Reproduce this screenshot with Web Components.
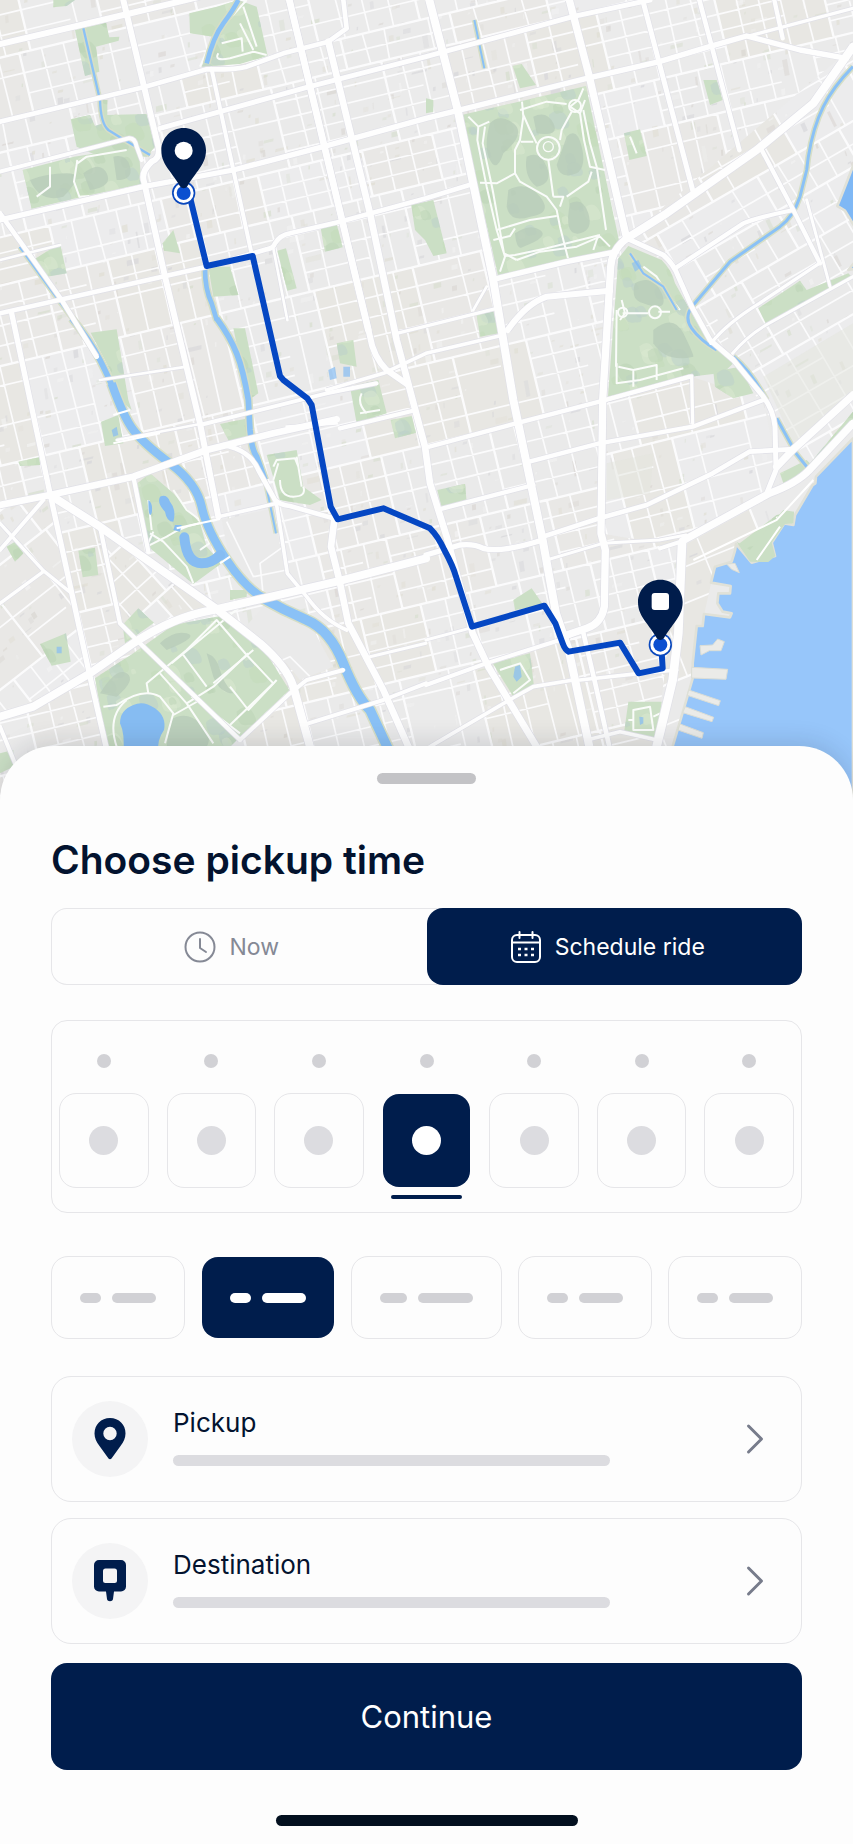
<!DOCTYPE html>
<html lang="en">
<head>
<meta charset="utf-8">
<meta name="viewport" content="width=device-width, initial-scale=1">
<title>Choose pickup time</title>
<style>
    :root {
        --navy: #001d4c;
        --ink: #03132f;
        --line: #e6e6e9;
        --bone: #d1d1d5;
        --bone-soft: #dcdce0;
        --muted: #858995;
    }
    body {
        margin: 0;
        background: #fdfdfd;
        color: var(--ink);
        font-family: Inter, "Liberation Sans", sans-serif;
    }
</style>
</head>
<body>
<city-map></city-map>
<ride-sheet heading="Choose pickup time">
    <ride-mode></ride-mode>
    <day-strip days="7" selected="3"></day-strip>
    <time-slots></time-slots>
    <place-list>
        <place-row label="Pickup">
            <svg slot="icon" width="32" height="42" viewBox="0 0 32 42"><path fill="#001d4c" fill-rule="evenodd" d="M16 0C7 0 .5 6.600 .5 15.400c0 4.600 1.900 8.300 5 12.700l9 12.400c.8 1 2.200 1 3 0l9-12.400c3.100-4.400 5-8.100 5-12.700C31.500 6.600 25 0 16 0zm0 8.800a6.700 6.700 0 1 1 0 13.400 6.700 6.700 0 0 1 0-13.400z"/></svg>
        </place-row>
        <place-row label="Destination">
            <svg slot="icon" width="32" height="42" viewBox="0 0 32 42"><path fill="#001d4c" fill-rule="evenodd" d="M5 0h22a5 5 0 0 1 5 5v21.500a5 5 0 0 1-5 5h-7l-1 7.500c-.3 3-5.700 3-6 0l-1-7.500H5a5 5 0 0 1-5-5V5a5 5 0 0 1 5-5zm6.500 8.500A2.500 2.500 0 0 0 9 11v9.500a2.500 2.500 0 0 0 2.500 2.500h9a2.500 2.500 0 0 0 2.500-2.500V11a2.500 2.500 0 0 0-2.500-2.500z"/></svg>
        </place-row>
    </place-list>
    <main-action>Continue</main-action>
</ride-sheet>

<script>
(function() {
    function attach(el, html) {
        const template = document.createElement('template');
        template.innerHTML = html;
        el.attachShadow({mode: 'open'});
        el.shadowRoot.appendChild(template.content.cloneNode(true));
    }

    /* ---- map ---- */

    // Small repeatable generator, so the side streets are the same on each load
    function makeRandom(seed) {
        return function() {
            seed = (seed * 16807) % 2147483647;
            return seed / 2147483647;
        };
    }

    // Areas that share one street direction: outline, angle, block width and height
    const districts = [
        {points: '0,0 2559,0 2559,140 1880,715 1820,1200 1800,1600 2040,1640 1965,2400 0,2400', angle: -13.5, w: 72, h: 58},
        {points: '1880,715 2559,140 2559,1270 2428,1410 2300,1240 2200,1080 2075,920 2025,805', angle: -30, w: 84, h: 66},
        {points: '1810,1200 2075,1130 2290,1200 2340,1450 2045,1640 1803,1600', angle: -14, w: 76, h: 74},
        {points: '2045,1640 2300,1500 2340,1600 2140,1720 2080,1990 2035,2240 1965,2240', angle: -22, w: 200, h: 110},
        {points: '0,1520 150,1485 270,2020 0,2150', angle: -38, w: 78, h: 72},
        {points: '310,1590 640,1820 400,1925 360,1870', angle: -42, w: 66, h: 76}
    ];

    const parks = [
        'M225 90L318 68L328 112L358 110L356 122L288 140L298 215L255 228Z',
        'M298 300L322 300L322 345L440 342L465 440L440 470L300 470L230 440L212 358L270 345L285 378L310 370Z',
        'M68 510L222 470L415 440L425 552L240 592L95 626Z',
        'M568 40L650 20L715 0L770 20L803 168L720 192L605 200L640 110L570 100Z',
        'M160 0L225 0L200 18L160 22Z',
        'M100 780L180 730L200 820L140 830Z',
        'M488 730L520 690L540 760L492 752Z',
        'M962 685L1010 672L1028 742L975 755Z',
        'M832 752L858 745L890 865L862 872Z',
        'M625 800L690 800L715 885L640 890Z',
        'M1234 615L1300 600L1340 760L1300 768L1275 720L1245 690Z',
        'M272 998L350 988L385 1200L395 1230L360 1200L330 1110Z',
        'M700 985L735 985L775 1180L745 1200Z',
        'M1010 1030L1060 1020L1070 1100L1020 1090Z',
        'M1050 1160L1135 1140L1160 1240L1070 1270Z',
        'M1172 1260L1235 1248L1248 1298L1185 1315Z',
        'M303 1265L355 1245L370 1330L315 1338Z',
        'M660 1272L745 1255L755 1330L690 1330Z',
        'M800 1365L890 1350L910 1460L965 1500L930 1515L840 1500Z',
        'M412 1450L450 1420L520 1480L600 1570L620 1640L665 1690L580 1752L445 1640Z',
        'M235 1652L285 1643L295 1725L248 1732Z',
        'M20 1640L45 1625L70 1660L45 1685Z',
        'M415 1825L462 1868L375 1930L368 1875Z',
        'M120 1932L198 1900L212 1985L155 1997Z',
        'M285 2035L400 1960L520 1875L660 1848L780 1930L868 2070L720 2210L690 2240L322 2240Z',
        'M690 1770L740 1770L740 1790L690 1800Z',
        'M55 1385L118 1372L120 1395L60 1398Z',
        'M0 2260L40 2250L40 2300L0 2320Z',
        'M1385 345L1758 258L1862 745L1495 830Z',
        'M1855 775L1885 738L1985 780Q2015 810 2025 850L2070 930L2115 1010L2200 1090L2170 1118L2070 1130L1824 1190Z',
        'M2140 1115L2220 1100L2260 1180L2200 1195L2145 1160Z',
        'M1538 198L1565 192L1608 255L1560 265Z',
        'M1872 400L1920 388L1940 468L1888 480Z',
        'M2110 240L2150 240L2168 300L2130 315Z',
        'M2275 925L2400 842L2420 870L2545 820L2559 835L2298 972Z',
        'M1430 945L1480 935L1495 1000L1440 1010Z',
        'M1278 295L1300 300L1300 335L1278 340Z',
        'M1312 1470L1395 1452L1400 1505L1325 1522Z',
        'M1540 1800L1595 1765L1630 1815L1545 1830Z',
        'M1478 1990L1590 1960L1602 2060L1540 2090Z',
        'M1885 2105L1985 2105L1970 2215L1872 2200Z',
        'M2340 1420L2420 1380L2440 1400L2350 1450Z',
        'M2430 1390L2559 1235L2559 1262L2440 1405Z',
        'M2212 1635L2330 1545L2382 1535L2376 1572L2350 1570L2315 1628L2310 1672L2250 1688Z'
    ];

    const groves = [
        'M1470 370Q1500 340 1540 370T1510 460Q1490 520 1470 480T1470 370Z',
        'M1700 410Q1730 380 1745 440T1730 520Q1680 540 1670 495Z',
        'M1525 570Q1580 540 1620 590T1590 650Q1530 670 1520 620Z',
        'M1580 470Q1620 450 1640 500T1610 560Q1570 530 1580 470Z',
        'M1600 350Q1640 330 1660 370T1610 400Z',
        'M1545 700Q1590 670 1620 690T1570 740Q1550 755 1545 700Z',
        'M1710 610Q1750 590 1765 640T1740 700Q1690 710 1710 610Z',
        'M1905 850Q1960 820 1985 880T1930 910Q1890 900 1905 850Z',
        'M1960 990Q2020 940 2050 1000T2080 1070Q2000 1090 1960 1030Z',
        'M510 2160Q560 2130 600 2170T620 2240H500Z',
        'M300 2080Q350 2000 380 2020T350 2090Z',
        'M480 1930Q520 1890 560 1900T500 1950Z',
        'M620 1960Q650 1970 660 2010T700 2080Q660 2080 640 2030Z',
        'M250 520Q300 480 320 520T270 570Z',
        'M90 540Q140 520 200 520T190 590Q120 610 90 540Z',
        'M340 470Q380 460 390 500T350 540Z'
    ];

    const parkPaths = [
        'M1405 350L1435 380L1468 365M1435 380L1432 420L1460 560L1490 690L1515 770L1500 815M1455 380L1448 430L1478 570L1512 760L1550 780',
        'M1550 780L1620 755L1730 740L1800 710L1830 740M1515 768L1545 765L1640 745L1800 705M1750 265L1735 300L1710 320L1740 340L1755 300',
        'M1560 330L1640 305L1700 312M1566 305L1570 350L1560 420L1545 450L1545 520L1490 550L1440 548M1568 340L1590 390L1610 430',
        'M1715 335L1685 390L1680 420M1740 340L1752 420L1770 500L1815 510M1775 515L1765 545L1700 590M1750 330L1770 430L1790 500L1805 600L1818 690',
        'M1545 520L1560 545L1640 590L1670 630L1680 680L1704 775M1645 480L1660 590M1562 425H1600M1490 690L1590 660L1670 648M1660 590H1690L1680 620',
        'M1480 720L1530 708L1545 685M1795 705L1780 750',
        'M1868 940H1945M1865 900L1875 940L1860 960M1975 935H2010M1855 1100L1900 1110L1970 1095V1140M1900 1110V1160M1850 1090V1150L1920 1140L2050 1105',
        'M1850 930L1848 1100M1930 800L1970 830L2000 880L2040 930',
        'M600 200L640 110L740 0M640 110L650 125M655 160Q640 185 690 175L760 155L800 165M730 20L770 140M665 130L725 115L728 155M760 150L720 70',
        'M232 480L222 545L238 590L268 588M232 490L260 470L380 450M150 500V560L110 590',
        'M820 1400L830 1380L885 1375L895 1400M820 1440L835 1390M840 1440Q840 1490 880 1490T910 1460M890 1370L905 1460',
        'M450 1600L490 1625L560 1700L580 1750M460 1595L440 1640L500 1610Q560 1570 650 1560M445 1500L455 1590M520 1470L560 1530L600 1560L628 1630L600 1650',
        'M445 2080L440 2050L560 1950L650 1860L740 1965L820 2050L690 2175M515 1990L720 1820M550 1965L620 2060M745 1960L640 2060L560 2110',
        'M310 2120L350 2115Q430 2060 480 2090L520 2140L495 2230M520 2145L600 2100M480 2020L560 2110L640 2230M575 2090L720 2200M640 2050L760 1950',
        'M350 2240Q320 2150 380 2100M690 2060L745 2130L830 2040',
        'M1900 2130L1950 2120L1960 2190L1900 2190ZM1885 2160H1900M1960 2150L1980 2140',
        'M1500 2010L1560 1990L1590 2040L1540 2080M1890 410L1910 460',
        'M2295 1650L2340 1580L2330 1550M2250 1660L2290 1640M1080 1240L1140 1230M1085 1180Q1070 1210 1100 1240'
    ];

    // [width, path]
    const roads = [
        [8, 'M350 1320L600 1272M820 745L862 960M0 780L180 735M300 1140L560 1100M1420 930L1460 860M860 1280L1010 1270'],
        [9, 'M2198 1060Q2240 1010 2298 975L2559 830M1110 1970L1278 1930M2420 600L2490 860M1640 1680L1808 1630L1978 1620L2058 1605M1278 1920L1408 1885'],
        [10, 'M2133 1030Q2180 970 2278 910L2458 790M1820 1200L2075 1128L2078 1270M0 1570L130 1712L215 1780M0 1810L130 1715M1190 1000L1490 925M2240 110L2559 25'],
        [11, 'M980 1170L1150 1120L1278 1060L1510 1005M655 1550L830 1510M830 1515L862 1720L920 1790Q970 1860 1040 1890M1290 2240L1528 2100L1600 2060L1720 2040M1740 2040L1920 2020L2030 2010M1760 2220L1860 2195L1970 2220'],
        [12, 'M0 515L385 415Q405 412 410 440L425 480M635 208L700 510L755 762M600 1275L880 1205L980 1180L1130 1150M130 1500L0 1650M720 2220L870 2080L920 2040L1030 2010M925 2170L1150 2100L1278 2050M1278 2055L1458 1990L1680 1920L1748 1890M0 2180L45 2290M1980 1645L2058 1620'],
        [13, 'M1288 1340L1548 1270L1798 1205L2070 1130M1588 1385L1798 1330L2078 1280L2290 1200M400 1430L445 1655M300 1580L360 1870L420 1930L720 2220M2280 440L2380 630L2460 790M2025 805L2230 670Q2260 655 2380 630M2323 0L2348 115M1318 1528L1600 1455M1020 1285L1248 1230'],
        [14, 'M0 365L430 262L620 208Q700 210 740 200L850 160L985 125L1040 85L1030 0M0 640L100 780L185 900L290 1070M2098 0L2138 150L2218 450M0 940L400 850L620 800L800 748Q820 745 825 730Q840 705 870 700L1020 665L1278 595L1408 555M670 1335Q750 1350 775 1410L825 1500Q840 1515 870 1518L1000 1555M1748 1890L1788 2060L1828 2240M1628 1610L1798 1555L1940 1515L2138 1420L2248 1355L2370 1348'],
        [15, 'M480 385L660 335L920 262L1278 170L1718 50L1950 0M1928 0L1978 190L2078 570M1880 715L1990 765Q2020 790 2035 830L2075 920L2130 1020L2200 1080L2290 1190Q2320 1230 2325 1280L2328 1410L2300 1480'],
        [16, 'M0 660L430 560L700 510L970 440L1278 355L1760 235L1978 185L2128 140L2240 108L2400 150L2540 175M1493 835L1700 785L1850 755M35 940L150 1480L270 2030L318 2240M1278 1665L1380 1635Q1420 1630 1450 1645Q1500 1660 1628 1620'],
        [18, 'M370 0L475 440Q482 475 455 485Q422 515 432 545L495 830L600 1270L655 1550M0 132L370 45L600 -10M1523 990Q1580 910 1640 890L1830 872M868 0L1110 1010Q1120 1070 1160 1110L1225 1155'],
        [20, 'M985 125L1110 640L1190 1020L1275 1340L1290 1450L1340 1610L1418 1900L1465 2000L1610 2240M0 1515L150 1485L400 1430L620 1350L820 1300L1010 1258M1003 1560L993 1640L1018 1740L1045 1870L1150 2070L1225 2240M868 0L1105 990'],
        [22, 'M1708 0L1768 230L1880 715M2559 1270L2428 1410Q2390 1450 2308 1480L2048 1622M2559 1185L2378 1350L2330 1400M1880 715Q1835 750 1832 800L1808 1200L1803 1600L1816 1650L1813 1820Q1805 1870 1760 1885L1700 1905'],
        [24, 'M1288 0L1373 330L1478 830L1540 1200L1628 1620L1668 1840L1706 1950L1768 2240M1880 715L2000 640L2270 450L2440 310L2559 140M150 1485L300 1580L640 1820L780 1930Q860 2000 880 2060L930 2240M0 2150L100 2120L270 2020L400 1930Q520 1850 640 1830L1010 1745L1278 1675'],
        [26, 'M2046 1630L2035 1900L2018 2040L1965 2260']
    ];

    // [width, path]
    const rivers = [
        [6, 'M1423 60L1453 205M795 1440L828 1600M1890 760L1930 820L1990 860L2030 930'],
        [7, 'M250 85L300 300Q302 370 325 390L360 412L450 465'],
        [9, 'M60 740L180 905L225 965M2559 200Q2500 260 2470 320T2425 470L2420 510L2400 590Q2380 650 2340 680L2190 785L2080 915Q2050 950 2075 985Q2100 1020 2150 1050M2200 1070Q2250 1110 2300 1200M2330 1255L2388 1360L2428 1410'],
        [14, 'M715 0Q700 30 670 70T620 190M615 805Q615 870 635 910L650 960'],
        [17, 'M215 955Q270 1020 300 1080T350 1190M650 955Q690 1010 710 1060T745 1200L750 1290Q755 1350 770 1370L795 1440'],
        [25, 'M335 1150Q370 1250 400 1290T510 1390Q590 1450 605 1520T680 1680T800 1800'],
        [29, 'M780 1790Q850 1830 920 1860T1030 1990T1110 2130L1180 2280']
    ];

    const coast = 'M2559 1315L2448 1430L2446 1450L2438 1455L2385 1545L2380 1575L2353 1570L2315 1628L2325 1668L2255 1688L2208 1632L2205 1652L2195 1685L2145 1700L2133 1748L2192 1758L2190 1780L2155 1780L2152 1810L2168 1835L2195 1840L2190 1852L2112 1842L2108 1878L2090 1878L2078 1990L2078 2035L2068 2070L2000 2300L1990 2400L2559 2400Z';

    const piers = [
        'M2075 2002L2183 2008L2178 2038L2075 2034Z',
        'M2066 2070L2161 2102L2156 2117L2062 2086Z',
        'M2056 2120L2141 2152L2136 2165L2048 2138Z',
        'M2040 2172L2110 2198L2106 2215L2034 2190Z',
        'M2100 1937L2138 1935L2153 1917L2173 1925L2163 1952L2128 1952L2103 1965Z',
        'M2180 1692L2205 1690L2218 1718L2195 1708Z'
    ];

    const route = 'M551 590L572 600L620 798L758 768L840 1128L850 1140L922 1195L935 1215L992 1520L1013 1558L1150 1525L1290 1585Q1315 1610 1333 1650Q1360 1700 1368 1730L1416 1880L1633 1817L1666 1870L1688 1930Q1695 1950 1706 1955L1860 1928L1916 2020L1988 2005L1984 1940';

    function pin(x, y, mark) {
        return `<g transform="translate(${x} ${y})">
            <circle r="35" fill="#0a48bd"/><circle r="30" fill="#fff"/><circle r="21" fill="#0b4fd0"/>
            <path d="M0 -195C-38 -195 -67 -165 -67 -128C-67 -103 -57 -86 -44 -68C-28 -46 -19 -34 -11 -20C-6 -12 6 -12 11 -20C19 -34 28 -46 44 -68C57 -86 67 -103 67 -128C67 -165 38 -195 0 -195Z" fill="#001c4b"/>
            ${mark}
        </g>`;
    }

    function streets() {
        const random = makeRandom(4217);
        const pick = list => list[Math.floor(random() * list.length)];
        let html = '';
        districts.forEach((district, i) => {
            const pts = district.points.split(' ').map(p => p.split(',').map(Number));
            const xs = pts.map(p => p[0]);
            const ys = pts.map(p => p[1]);
            const cx = (Math.min(...xs) + Math.max(...xs)) / 2;
            const cy = (Math.min(...ys) + Math.max(...ys)) / 2;
            const reach = Math.hypot(Math.max(...xs) - cx, Math.max(...ys) - cy) + 80;
            let wide = '';
            let thin = '';
            let ground = '';
            let lots = '';
            // rows of blocks, each with its own run of cross streets
            for (let y = -reach; y < reach; ) {
                const rows = 2 + Math.floor(random() * 4);
                const depth = district.h * rows * (0.8 + random() * 0.4);
                for (let x = -reach; x < reach; ) {
                    const cols = 3 + Math.floor(random() * 3);
                    const width = district.w * cols * (0.8 + random() * 0.3);
                    wide += `M${x.toFixed()} ${(y + depth).toFixed()}V${y.toFixed()}H${(x + width).toFixed()}`;
                    ground += `<path d="M${x.toFixed()} ${y.toFixed()}h${width.toFixed()}v${depth.toFixed()}h-${width.toFixed()}z" fill="${pick(['#ececed', '#ebebeb', '#e9e8e6', '#eaeaea', '#e8e7e3'])}"/>`;
                    for (let c = 1; c < cols; c++) {
                        const at = (x + width * c / cols).toFixed();
                        if (random() < 0.88) {
                            thin += `M${at} ${y.toFixed()}L${(+at + random() * 10 - 5).toFixed()} ${(y + depth).toFixed()}`;
                        }
                    }
                    for (let r = 1; r < rows; r++) {
                        const at = (y + depth * r / rows).toFixed();
                        if (random() < 0.82) {
                            thin += `M${x.toFixed()} ${at}H${(x + width * (random() < 0.75 ? 1 : 0.6)).toFixed()}`;
                        }
                    }
                    for (let n = 0; n < cols * rows; n++) {
                        const lx = (x + random() * width).toFixed();
                        const ly = (y + random() * depth).toFixed();
                        const long = (4 + random() * random() * 50).toFixed();
                        const short = (3 + random() * 14).toFixed();
                        const box = random() < 0.5 ? [long, short] : [short, long];
                        lots += `<path d="M${lx} ${ly}h${box[0]}l-3 ${box[1]}h-${box[0]}z" fill="${pick(['#d8d4d0', '#dfddd2', '#d4d4d8', '#d5ddcc', '#f3f3f3'])}" opacity="${(0.25 + random() * 0.4).toFixed(2)}"/>`;
                    }
                    x += width;
                }
                y += depth;
            }
            html += `<clipPath id="d${i}"><polygon points="${district.points}"/></clipPath>
                <g clip-path="url(#d${i})">
                <g transform="translate(${cx} ${cy}) rotate(${district.angle})" fill="none" stroke="#fbfbfc">
                    <g stroke="none">${ground}${lots}</g>
                    <path stroke-width="5" d="${thin}"/><path stroke-width="7" d="${wide}"/>
                </g></g>`;
        });
        return html;
    }

    // soft tree cover, clipped to the parks
    function trees() {
        const random = makeRandom(911);
        let html = '';
        for (let n = 0; n < 1600; n++) {
            const x = (random() * 2559).toFixed();
            const y = (random() * 2300).toFixed();
            const r = 8 + random() * 26;
            const tint = ['#bcd4b5', '#dbe9d2', '#c3dcba', '#bcd0cb'][Math.floor(random() * 4)];
            html += `<path d="M${x} ${y}q${r.toFixed()} -${(r * 0.9).toFixed()} ${(r * 1.6).toFixed()} ${(r * 0.2).toFixed()}t-${(r * 0.5).toFixed()} ${r.toFixed()}q-${r.toFixed()} 9 -${(r * 1.1).toFixed()} -${(r * 1.2).toFixed()}z" fill="${tint}" opacity=".5"/>`;
        }
        return `<clipPath id="parks"><path d="${parks.join('')}"/></clipPath><g clip-path="url(#parks)">${html}</g>`;
    }

    class CityMap extends HTMLElement {
        constructor() {
            super();
            const banks = rivers.map(r => `<path stroke-width="${r[0] + 9}" d="${r[1]}"/>`).join('');
            const water = rivers.map(r => `<path stroke-width="${r[0]}" d="${r[1]}"/>`).join('');
            const edges = roads.map(r => `<path stroke-width="${r[0] + 4}" d="${r[1]}"/>`).join('');
            const fills = roads.map(r => `<path stroke-width="${r[0]}" d="${r[1]}"/>`).join('');
            attach(this, `
                <style>
                    :host {
                        display: block;
                    }
                    svg {
                        display: block;
                        width: 100%;
                        height: auto;
                    }
                </style>
                <svg viewBox="0 0 2559 2400" role="img" aria-label="Route from pickup to destination">
                    <rect width="2559" height="2400" fill="#ebebeb"/>
                    ${streets()}
                    <path fill="#eaeaea" d="M665 1560L820 1525L855 1720L900 1780L790 1790L690 1690ZM720 1900L790 1820L940 1890L1000 2000L900 2040L860 1990Z"/>
                    <path fill="#e4e5de" opacity=".5" d="M1820 1390L1960 1360L1950 1480L1820 1500ZM2290 1130L2559 970V1180L2380 1330Z"/>
                    <path fill="none" stroke="#fbfbfc" stroke-width="5" d="M680 1565L760 1730L860 1710M790 1790L780 1690L850 1640M730 1900L800 2000L870 1970L930 2030"/>
                    <g fill="#cbdfc5">${parks.map(d => `<path d="${d}"/>`).join('')}</g>
                    ${trees()}
                    <g fill="#b7cbb9" opacity=".75">${groves.map(d => `<path d="${d}"/>`).join('')}</g>
                    <g fill="none" stroke="#fafcfa" stroke-width="6" stroke-linejoin="round">
                        ${parkPaths.map(d => `<path d="${d}"/>`).join('')}
                        <circle cx="1645" cy="445" r="34"/><circle cx="1645" cy="440" r="15" stroke-width="4"/>
                        <circle cx="1868" cy="937" r="14"/><circle cx="1965" cy="937" r="18"/><circle cx="1725" cy="318" r="18"/>
                    </g>
                    <g fill="none" stroke-linejoin="round">
                        <g stroke="#d6dec6">${banks}</g>
                        <g stroke="#8ac1f6">${water}</g>
                        <path stroke="#86bcf2" stroke-width="30" stroke-linecap="round" d="M553 1612Q560 1690 605 1690Q635 1690 660 1665"/>
                    </g>
                    <g fill="#86bcf2">
                        <path d="M370 2260Q375 2200 360 2170Q360 2130 400 2115Q430 2100 465 2125Q500 2150 492 2190Q470 2220 475 2260Z"/>
                        <path d="M480 1490Q500 1480 510 1505Q530 1530 520 1565Q500 1565 495 1535Q470 1510 480 1490ZM445 1500Q460 1510 455 1540Q445 1560 445 1500ZM525 1575L545 1575L540 1595L520 1590Z"/>
                        <path opacity=".7" d="M1545 2000L1560 1995L1565 2030L1550 2045L1540 2030ZM1918 2150L1930 2152V2170L1920 2175ZM335 1290L350 1280L355 1305L340 1310ZM985 1110L1005 1100L1010 1135L990 1140ZM1030 1100H1050V1130H1030ZM170 1940H185V1960H170Z"/>
                        <path d="M1895 790L1915 780L1925 800L1905 815Z" opacity=".6"/>
                    </g>
                    <g stroke="#e0e1d8" stroke-width="8" stroke-linejoin="round">
                        <path fill="#97c6fa" d="${coast}"/>
                        <path fill="#7fb8f5" d="M2570 470L2535 560L2512 618L2535 632L2570 690ZM2570 780L2545 810L2570 805Z"/>
                    </g>
                    <path fill="#cbdfc5" d="M2210 1625L2250 1685L2305 1686L2326 1668L2315 1628L2355 1572L2380 1570L2382 1535L2350 1530L2250 1650Z"/>
                    <g fill="#ebebe8" stroke="#dcded6" stroke-width="3">${piers.map(d => `<path d="${d}"/>`).join('')}</g>
                    <g fill="none" stroke-linejoin="round">
                        <g stroke="#e0e0e7">${edges}</g>
                        <g stroke="#fefefe" stroke-linecap="round">${fills}</g>
                    </g>
                    <path fill="none" stroke="#fff" stroke-width="6" d="M340 1330L480 1300M530 1585L660 1557M660 1690L690 1670M390 1230L340 1245M2270 1680L2340 1580M2080 1680L2330 1560L2440 1440"/>
                    <path d="${route}" fill="none" stroke="#0547c3" stroke-width="18" stroke-linejoin="round"/>
                    ${pin(551, 579, '<circle cy="-127" r="27" fill="#fff"/>')}
                    ${pin(1981, 1934, '<rect x="-26" y="-155" width="52" height="51" rx="9" fill="#fff"/>')}
                </svg>
            `);
        }
    }
    window.customElements.define('city-map', CityMap);

    /* ---- sheet ---- */

    class RideSheet extends HTMLElement {
        constructor() {
            super();
            attach(this, `
                <style>
                    :host {
                        display: flex;
                        flex-direction: column;
                        box-sizing: border-box;
                        position: relative;
                        margin-top: -54px;
                        padding: 27px 51px 18px;
                        border-radius: 54px 54px 0 0;
                        background: #fdfdfd;
                        box-shadow: 0 -4px 24px rgba(20, 30, 50, .14);
                    }
                    .handle, .home {
                        align-self: center;
                        height: 11px;
                        border-radius: 6px;
                    }
                    .handle {
                        width: 99px;
                        background: #c3c3c6;
                    }
                    .home {
                        width: 302px;
                        margin-top: 45px;
                        background: #03101f;
                    }
                    h1 {
                        margin: 52px 0 24px;
                        font-size: 39px;
                        line-height: 48px;
                        font-weight: 600;
                    }
                </style>
                <div class="handle"></div>
                <h1></h1>
                <slot></slot>
                <div class="home"></div>
            `);
            this._heading = this.shadowRoot.querySelector('h1');
        }

        connectedCallback() {
            this._heading.textContent = this.getAttribute('heading');
        }
    }
    window.customElements.define('ride-sheet', RideSheet);

    class RideMode extends HTMLElement {
        constructor() {
            super();
            attach(this, `
                <style>
                    :host {
                        display: flex;
                        height: 77px;
                        border-radius: 16px;
                        box-shadow: inset 0 0 0 1px var(--line);
                    }
                    button {
                        flex: 1;
                        display: flex;
                        align-items: center;
                        justify-content: center;
                        gap: 13px;
                        padding: 0 14px 0 0;
                        border: none;
                        border-radius: 16px;
                        background: none;
                        color: var(--muted);
                        font: 400 23px/32px Inter, "Liberation Sans", sans-serif;
                    }
                    button[aria-pressed=true] {
                        background: var(--navy);
                        color: #fff;
                    }
                    svg {
                        fill: none;
                        stroke: currentColor;
                        stroke-linecap: round;
                        stroke-linejoin: round;
                    }
                </style>
                <button type="button" aria-pressed="false">
                    <svg width="32" height="32" viewBox="0 0 32 32" stroke-width="2"><circle cx="16" cy="16" r="14.500"/><path d="M16 8v9l6 4"/></svg>
                    Now
                </button>
                <button type="button" aria-pressed="true">
                    <svg width="32" height="32" viewBox="0 0 32 32" stroke-width="2"><rect x="2" y="4" width="28" height="27" rx="5"/><path d="M2 11.500h28M9.500 1v6M22.500 1v6"/><path stroke-width="2.600" stroke-linecap="butt" d="M8 18h3M14.500 18h3M21 18h3M8 24h3M14.500 24h3M21 24h3"/></svg>
                    Schedule ride
                </button>
            `);
            this._buttons = this.shadowRoot.querySelectorAll('button');
            for (const button of this._buttons) {
                button.addEventListener('click', () => this._select(button));
            }
        }

        _select(chosen) {
            for (const button of this._buttons) {
                button.setAttribute('aria-pressed', button === chosen);
            }
        }
    }
    window.customElements.define('ride-mode', RideMode);

    class DayStrip extends HTMLElement {
        constructor() {
            super();
            attach(this, `
                <style>
                    :host {
                        display: flex;
                        gap: 18px;
                        box-sizing: border-box;
                        height: 193px;
                        margin-top: 35px;
                        padding: 0 7px;
                        border: 1px solid var(--line);
                        border-radius: 16px;
                    }
                    .day {
                        flex: 1;
                        display: flex;
                        flex-direction: column;
                        align-items: center;
                        padding-top: 33px;
                    }
                    .name {
                        width: 14px;
                        height: 14px;
                        border-radius: 50%;
                        background: var(--bone);
                    }
                    button {
                        display: grid;
                        place-items: center;
                        box-sizing: border-box;
                        width: 100%;
                        height: 95px;
                        margin-top: 25px;
                        padding: 0;
                        border: 1px solid var(--line);
                        border-radius: 17px;
                        background: none;
                    }
                    button span {
                        width: 29px;
                        height: 29px;
                        border-radius: 50%;
                        background: var(--bone-soft);
                    }
                    .selected button {
                        border: 1px solid transparent;
                        background: var(--navy) padding-box;
                    }
                    .selected button span {
                        background: #fff;
                    }
                    .selected::after {
                        content: "";
                        width: 71px;
                        height: 4px;
                        margin-top: 7px;
                        border-radius: 2px;
                        background: var(--navy);
                    }
                </style>
            `);
        }

        connectedCallback() {
            const count = Number(this.getAttribute('days'));
            const selected = Number(this.getAttribute('selected'));
            for (let i = 0; i < count; i++) {
                const day = document.createElement('div');
                day.className = i === selected ? 'day selected' : 'day';
                day.innerHTML = `<div class="name"></div><button type="button" aria-label="Day ${i + 1}"><span></span></button>`;
                day.querySelector('button').addEventListener('click', () => this._select(day));
                this.shadowRoot.appendChild(day);
            }
        }

        _select(day) {
            this.shadowRoot.querySelector('.selected').classList.remove('selected');
            day.classList.add('selected');
        }
    }
    window.customElements.define('day-strip', DayStrip);

    class TimeSlots extends HTMLElement {
        constructor() {
            super();
            attach(this, `
                <style>
                    :host {
                        display: flex;
                        gap: 16px;
                        height: 83px;
                        margin-top: 43px;
                    }
                    button {
                        flex: 1 1 auto;
                        display: flex;
                        align-items: center;
                        justify-content: center;
                        gap: 11px;
                        box-sizing: border-box;
                        padding: 0 27px;
                        border: 1px solid var(--line);
                        border-radius: 17px;
                        background: none;
                    }
                    span {
                        width: 21px;
                        height: 10px;
                        border-radius: 5px;
                        background: var(--bone);
                    }
                    span + span {
                        width: 44px;
                    }
                    .long span {
                        width: 27px;
                    }
                    .long span + span {
                        width: 55px;
                    }
                    .selected {
                        border-color: transparent;
                        background: var(--navy) padding-box;
                    }
                    .selected span {
                        background: #fff;
                    }
                </style>
                <button type="button" aria-label="Time 1"><span></span><span></span></button>
                <button type="button" aria-label="Time 2" class="selected"><span></span><span></span></button>
                <button type="button" aria-label="Time 3" class="long"><span></span><span></span></button>
                <button type="button" aria-label="Time 4"><span></span><span></span></button>
                <button type="button" aria-label="Time 5"><span></span><span></span></button>
            `);
            for (const button of this.shadowRoot.querySelectorAll('button')) {
                button.addEventListener('click', () => {
                    this.shadowRoot.querySelector('.selected').classList.remove('selected');
                    button.classList.add('selected');
                });
            }
        }
    }
    window.customElements.define('time-slots', TimeSlots);

    class PlaceList extends HTMLElement {
        constructor() {
            super();
            attach(this, `
                <style>
                    :host {
                        display: grid;
                        gap: 16px;
                        margin-top: 37px;
                    }
                </style>
                <slot></slot>
            `);
        }
    }
    window.customElements.define('place-list', PlaceList);

    class PlaceRow extends HTMLElement {
        constructor() {
            super();
            attach(this, `
                <style>
                    :host {
                        display: block;
                    }
                    button {
                        display: flex;
                        align-items: center;
                        box-sizing: border-box;
                        width: 100%;
                        height: 126px;
                        padding: 0 37px 0 20px;
                        border: 1px solid var(--line);
                        border-radius: 20px;
                        background: none;
                        color: var(--ink);
                        text-align: left;
                        font: 400 26px/32px Inter, "Liberation Sans", sans-serif;
                    }
                    .badge {
                        display: grid;
                        place-items: center;
                        width: 76px;
                        height: 76px;
                        margin-right: 25px;
                        border-radius: 50%;
                        background: #f4f4f5;
                    }
                    .text {
                        flex: 1;
                        display: grid;
                        gap: 16px;
                        padding-bottom: 5px;
                    }
                    .address {
                        width: 437px;
                        max-width: 100%;
                        height: 11px;
                        border-radius: 6px;
                        background: var(--bone-soft);
                    }
                </style>
                <button type="button">
                    <span class="badge"><slot name="icon"></slot></span>
                    <span class="text"><span class="label"></span><span class="address"></span></span>
                    <svg width="18" height="32" viewBox="0 0 18 32" fill="none" stroke="#777c8b" stroke-width="3" stroke-linecap="round" stroke-linejoin="round"><path d="M2.500 3L15.500 16L2.500 29"/></svg>
                </button>
            `);
            this._label = this.shadowRoot.querySelector('.label');
        }

        connectedCallback() {
            this._label.textContent = this.getAttribute('label');
        }
    }
    window.customElements.define('place-row', PlaceRow);

    class MainAction extends HTMLElement {
        constructor() {
            super();
            attach(this, `
                <style>
                    :host {
                        display: block;
                        margin-top: 19px;
                    }
                    button {
                        display: block;
                        width: 100%;
                        height: 107px;
                        border: none;
                        border-radius: 16px;
                        background: var(--navy);
                        color: #fff;
                        font: 400 31px/40px Inter, "Liberation Sans", sans-serif;
                    }
                </style>
                <button type="button"><slot></slot></button>
            `);
        }
    }
    window.customElements.define('main-action', MainAction);
})();
</script>
</body>
</html>
